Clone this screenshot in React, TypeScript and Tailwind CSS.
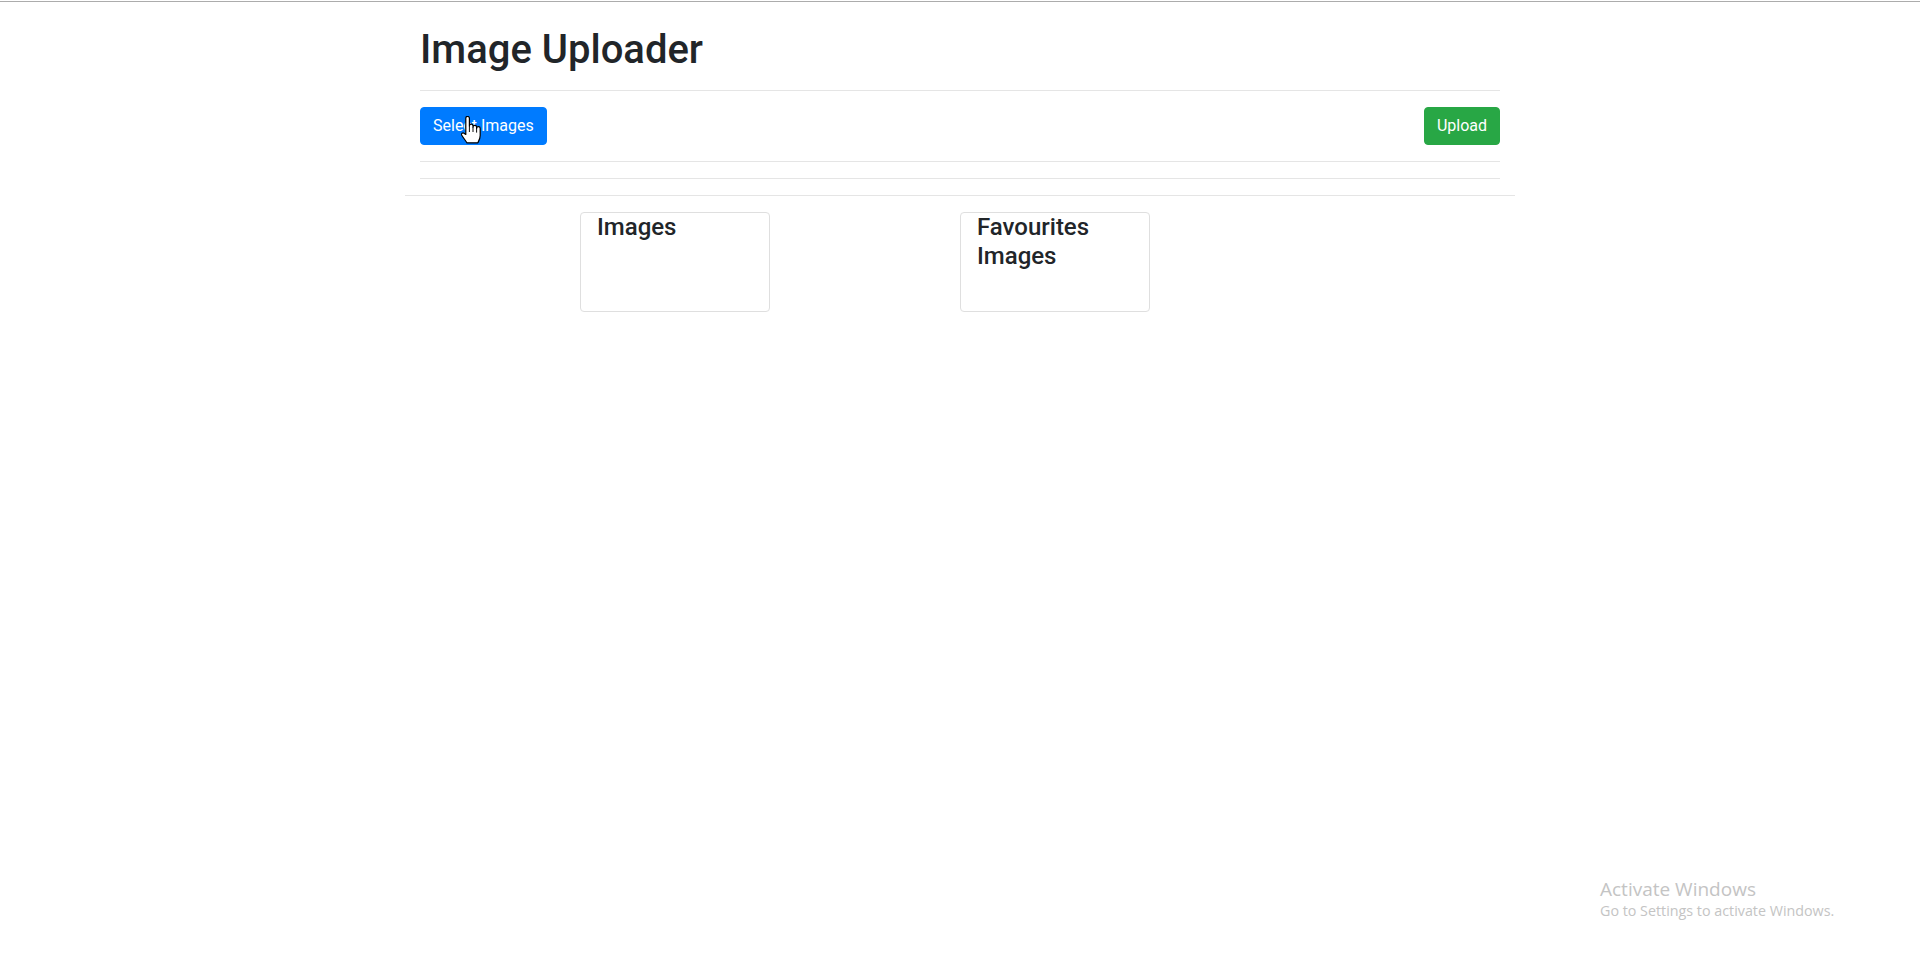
import React from 'react';

function HandCursor() {
  return (
    <svg
      className="absolute left-[461px] top-[116px] pointer-events-none"
      width="21"
      height="29"
      viewBox="0 0 17.5 23.5"
    >
      <path
        d="M4 1.5a1.5 1.5 0 0 1 3 0V8a1.5 1.5 0 0 1 3 0v1a1.5 1.5 0 0 1 3 0v1a1.5 1.5 0 0 1 3 0v6c0 3-1.5 5-2 6H5c-1-1.5-3-4-4.5-6.5a1.3 1.3 0 0 1 2-1.5L4 15Z"
        fill="#fff"
        stroke="#000"
        strokeWidth="1"
        strokeLinejoin="round"
      />
      <path d="M7 8v5M10 9v4M13 10v3.5" stroke="#000" strokeWidth="0.8" />
    </svg>
  );
}

function Card({ title }: { title: string }) {
  return (
    <div className="justify-self-end w-[190px] h-[100px] border border-[#dfdfdf] rounded-[4px]">
      <h4 className="pl-4 pr-2 text-[24px] leading-[1.2] font-medium">{title}</h4>
    </div>
  );
}

export default function App() {
  return (
    <div className="relative min-h-screen bg-white text-[#212529] font-['Roboto',sans-serif]">
      <div className="h-px" />
      <div className="h-px bg-[#acacac]" />

      <div className="w-[1110px] mx-auto">
        <div className="px-[15px] pt-6">
          <h1 className="text-[40px] leading-[1.2] font-medium">Image Uploader</h1>
          <hr className="mt-4 border-t border-[#e5e5e5]" />
          <div className="mt-4 flex items-center justify-between">
            <button className="h-[38px] px-3 text-base leading-6 text-white bg-[#007bff] border border-[#007bff] rounded-[4px]">
              Select Images
            </button>
            <button className="h-[38px] px-3 text-base leading-6 text-white bg-[#28a745] border border-[#28a745] rounded-[4px]">
              Upload
            </button>
          </div>
          <hr className="mt-4 border-t border-[#e5e5e5]" />
          <hr className="mt-4 border-t border-[#e5e5e5]" />
        </div>
        <hr className="mt-4 border-t border-[#e5e5e5]" />

        <div className="mt-4 -mx-[15px] grid grid-cols-3">
          <Card title="Images" />
          <Card title="Favourites Images" />
          <div />
        </div>
      </div>

      <HandCursor />

      <div className="absolute left-[1600px] top-[877px] font-['Open_Sans',sans-serif] text-[#c4c4c4] pointer-events-none">
        <div className="text-[19px] leading-6">Activate Windows</div>
        <div className="text-[14.3px] leading-5">Go to Settings to activate Windows.</div>
      </div>
    </div>
  );
}
